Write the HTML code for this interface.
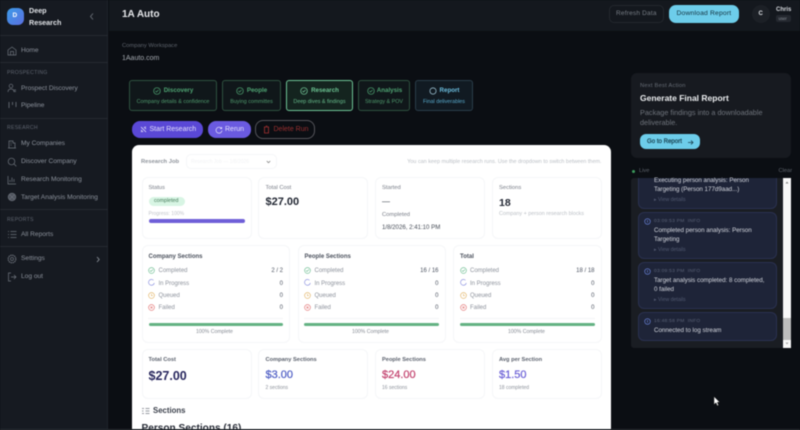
<!DOCTYPE html>
<html><head><meta charset="utf-8">
<style>
*{box-sizing:border-box;margin:0;padding:0}
html,body{width:800px;height:430px;overflow:hidden;background:#0b0e13;font-family:"Liberation Sans",sans-serif}
.a{position:absolute}
.t{position:absolute;white-space:nowrap;line-height:1}
#root{position:relative;width:800px;height:430px;overflow:hidden;filter:blur(.45px)}
.nav{color:#8b919b;font-size:6.6px}
.cap{color:#5f6570;font-size:5.2px;letter-spacing:.25px}
.line{position:absolute;left:0;width:108px;height:1px;background:#262a31}
svg{position:absolute;fill:none}
.step{position:absolute;top:80px;height:30.5px;border:1px solid #2f5240;border-radius:3px;background:#10171a}
.step b{position:absolute;top:7px;left:0;right:0;text-align:center;font-size:6.2px;color:#4fa573;line-height:1;padding-left:11px}
.step i{position:absolute;top:18.5px;left:0;right:0;text-align:center;font-style:normal;font-size:5.4px;color:#4f9a6d;line-height:1;white-space:nowrap}
.step svg{top:6px}
.card{position:absolute;background:#fff;border:1px solid #f5f6f8;border-radius:6px}
.lab{color:#777c86;font-size:5.8px}
.row{color:#8c919b;font-size:6px}
.val{color:#4b5260;font-size:6px;text-align:right}
.log{position:absolute;left:638px;width:139px;background:#1e2438;border:1px solid #2a3150;border-radius:6px}
.lt{color:#d5d8df;font-size:6.2px}
.lm{color:#5c6478;font-size:4.8px;letter-spacing:.3px}
.vd{color:#515970;font-size:5.2px}
.m{-webkit-text-stroke:.22px currentColor}
</style></head><body>
<div id="root">
<!-- sidebar -->
<div class="a" style="left:0;top:0;width:108px;height:430px;background:#161a21;border-right:1px solid #20242b"></div>
<div class="a" style="left:7px;top:8px;width:17px;height:17px;border-radius:6px;background:linear-gradient(135deg,#3b9be8,#5b6fe0)"></div>
<div class="t" style="left:12.5px;top:13px;font-size:6.5px;font-weight:bold;color:#fff">D</div>
<div class="t" style="left:29px;top:7px;font-size:7.2px;font-weight:bold;color:#dfe2e6">Deep</div>
<div class="t" style="left:29px;top:19px;font-size:7.2px;font-weight:bold;color:#dfe2e6">Research</div>
<svg style="left:89px;top:12px" width="6" height="9" viewBox="0 0 6 9"><path d="M4 1.500 1.500 4.500 4 7.500" stroke="#6a7078" stroke-width=".9"/></svg>
<div class="line" style="top:35px"></div>
<svg style="left:7px;top:46px" width="10" height="10" viewBox="0 0 10 10"><path d="M1 9V4L5 1l4 3v5zM3.500 9V5.500h3V9" stroke="#6f757e" stroke-width=".7"/></svg>
<div class="t nav" style="left:21px;top:47.500px">Home</div>
<div class="line" style="top:62px"></div>
<div class="t cap" style="left:7px;top:70.500px">PROSPECTING</div>
<svg style="left:7px;top:83px" width="10" height="10" viewBox="0 0 10 10"><circle cx="4" cy="3" r="1.800" stroke="#6f757e" stroke-width=".7"/><path d="M1 9c0-2 1.300-3 3-3s3 1 3 3M7 7h2M7 8.500h2" stroke="#6f757e" stroke-width=".7"/></svg>
<div class="t nav" style="left:21px;top:85.500px">Prospect Discovery</div>
<svg style="left:8px;top:101px" width="9" height="9" viewBox="0 0 9 9"><path d="M1 1v6M4.500 1v3M8 1v5" stroke="#6f757e" stroke-width=".8"/></svg>
<div class="t nav" style="left:21px;top:103px">Pipeline</div>
<div class="line" style="top:118px"></div>
<div class="t cap" style="left:7px;top:126px">RESEARCH</div>
<svg style="left:7px;top:139px" width="10" height="10" viewBox="0 0 10 10"><path d="M2 9V2h4v2h2v5zM1 9h8M3.500 4h1M3.500 6h1" stroke="#6f757e" stroke-width=".7"/></svg>
<div class="t nav" style="left:21px;top:141px">My Companies</div>
<svg style="left:7px;top:157px" width="10" height="10" viewBox="0 0 10 10"><circle cx="4.500" cy="4.500" r="3.300" stroke="#6f757e" stroke-width=".7"/><path d="M7 7l2.300 2.300" stroke="#6f757e" stroke-width=".7"/></svg>
<div class="t nav" style="left:21px;top:158.500px">Discover Company</div>
<svg style="left:7px;top:175px" width="10" height="10" viewBox="0 0 10 10"><path d="M1 1v8h8M3 7V5M5 7V2.500M7 7V4" stroke="#6f757e" stroke-width=".7"/></svg>
<div class="t nav" style="left:21px;top:176.500px">Research Monitoring</div>
<svg style="left:7px;top:192px" width="10" height="10" viewBox="0 0 10 10"><circle cx="5" cy="5" r="3.800" fill="#4d525b" stroke="#6f757e" stroke-width=".7"/><path d="M2.500 2.500l5 5M7.500 2.500l-5 5" stroke="#6f757e" stroke-width=".6"/></svg>
<div class="t nav" style="left:21px;top:194.500px">Target Analysis Monitoring</div>
<div class="line" style="top:209px"></div>
<div class="t cap" style="left:7px;top:217.500px">REPORTS</div>
<svg style="left:8px;top:230px" width="9" height="9" viewBox="0 0 9 9"><path d="M0 1.500h1M2.500 1.500H8.500M0 4.500h1M2.500 4.500H8.500M0 7.500h1M2.500 7.500H8.500" stroke="#6f757e" stroke-width=".8"/></svg>
<div class="t nav" style="left:21px;top:231.500px">All Reports</div>
<div class="line" style="top:246px"></div>
<svg style="left:7px;top:254px" width="10" height="10" viewBox="0 0 10 10"><circle cx="5" cy="5" r="3.800" stroke="#6f757e" stroke-width="1.100" stroke-dasharray="1.400 .6"/><circle cx="5" cy="5" r="1.500" stroke="#6f757e" stroke-width=".7"/></svg>
<div class="t nav" style="left:21px;top:255.500px">Settings</div>
<svg style="left:95px;top:256px" width="6" height="7" viewBox="0 0 6 7"><path d="M2 1l2.200 2.500L2 6" stroke="#8a9098" stroke-width=".9"/></svg>
<svg style="left:7px;top:272px" width="10" height="10" viewBox="0 0 10 10"><path d="M4 1H1.500v8H4M4 5h5M7 3l2 2-2 2" stroke="#6f757e" stroke-width=".7"/></svg>
<div class="t nav" style="left:21px;top:273.500px">Log out</div>

<!-- header -->
<div class="a" style="left:109px;top:0;width:691px;height:31px;background:#14181e"></div>
<div class="t" style="left:122px;top:9.500px;font-size:10px;font-weight:bold;color:#e6e8eb">1A Auto</div>
<div class="a" style="left:609px;top:5px;width:55px;height:18px;border:1px solid #23272d;border-radius:5px"></div>
<div class="t" style="left:616px;top:10.500px;font-size:6.500px;color:#777d85;letter-spacing:.2px">Refresh Data</div>
<div class="a" style="left:669px;top:5px;width:70px;height:18px;border-radius:7px;background:#6dcdea"></div>
<div class="t" style="left:676.500px;top:10.500px;font-size:6.800px;color:#12303d;letter-spacing:.15px">Download Report</div>
<div class="a" style="left:752px;top:5px;width:18px;height:18px;border-radius:50%;background:#1c2026"></div>
<div class="t" style="left:758.500px;top:11px;font-size:6px;font-weight:bold;color:#dfe2e6">C</div>
<div class="t" style="left:776px;top:6.500px;font-size:6px;font-weight:bold;color:#d5d8dd">Chris</div>
<div class="a" style="left:776px;top:15px;width:15px;height:7px;border-radius:2px;background:#24282f"></div>
<div class="t" style="left:778.500px;top:16.500px;font-size:4.300px;color:#8a9098">user</div>

<!-- workspace -->
<div class="t" style="left:122px;top:43.500px;font-size:5.800px;color:#5e646d">Company Workspace</div>
<div class="t" style="left:122px;top:54.500px;font-size:7px;color:#a5aab1">1Aauto.com</div>

<!-- stepper -->
<div class="step" style="left:129px;width:88px"><svg style="left:23px" width="8" height="8" viewBox="0 0 8 8"><circle cx="4" cy="4" r="3.300" stroke="#4fa573" stroke-width=".7"/><path d="M2.500 4l1 1 2-2" stroke="#4fa573" stroke-width=".7"/></svg><b>Discovery</b><i>Company details &amp; confidence</i></div>
<div class="step" style="left:222px;width:59px"><svg style="left:13px" width="8" height="8" viewBox="0 0 8 8"><circle cx="4" cy="4" r="3.300" stroke="#4fa573" stroke-width=".7"/><path d="M2.500 4l1 1 2-2" stroke="#4fa573" stroke-width=".7"/></svg><b>People</b><i>Buying committes</i></div>
<div class="step" style="left:286px;width:67px;border-color:#6fc596;background:#14241f"><svg style="left:13px" width="8" height="8" viewBox="0 0 8 8"><circle cx="4" cy="4" r="3.300" stroke="#78cf9e" stroke-width=".7"/><path d="M2.500 4l1 1 2-2" stroke="#78cf9e" stroke-width=".7"/></svg><b style="color:#6cc492">Research</b><i style="color:#66bb8b">Deep dives &amp; findings</i></div>
<div class="step" style="left:358px;width:52px"><svg style="left:8px" width="8" height="8" viewBox="0 0 8 8"><circle cx="4" cy="4" r="3.300" stroke="#4fa573" stroke-width=".7"/><path d="M2.500 4l1 1 2-2" stroke="#4fa573" stroke-width=".7"/></svg><b>Analysis</b><i>Strategy &amp; POV</i></div>
<div class="step" style="left:415px;width:58px;border-color:#2a3d4a;background:#111a22"><svg style="left:13px" width="8" height="8" viewBox="0 0 8 8"><circle cx="4" cy="4" r="3.100" stroke="#a8cfe0" stroke-width=".7"/></svg><b style="color:#6cbfe0">Report</b><i style="color:#58aacc">Final deliverables</i></div>

<!-- buttons -->
<div class="a" style="left:132px;top:121px;width:71px;height:17px;border-radius:8px;background:#5a48d6"></div>
<svg style="left:140px;top:126px" width="7" height="7" viewBox="0 0 7 7"><path d="M1 1l5 5M1 4l2 2M4 1l2 2M1 6l1-1M5 1l1 0" stroke="#e6e3fa" stroke-width=".8"/></svg>
<div class="t" style="left:149.500px;top:126px;font-size:7px;color:#e2dffa">Start Research</div>
<div class="a" style="left:208px;top:121px;width:43px;height:17px;border-radius:8px;background:#6a5ae0"></div>
<svg style="left:215px;top:125.500px" width="8" height="8" viewBox="0 0 8 8"><path d="M6.500 2.500A3 3 0 1 0 7 4.500M6.700 1v1.700H5" stroke="#e6e3fa" stroke-width=".7"/></svg>
<div class="t" style="left:225px;top:126px;font-size:7px;color:#e2dffa">Rerun</div>
<div class="a" style="left:255px;top:120px;width:60px;height:19px;border-radius:8px;border:1px solid #55555b"></div>
<svg style="left:263px;top:125px" width="7" height="9" viewBox="0 0 7 9"><path d="M1.500 2h4v6h-4zM1 2h5M2.800 1h1.500" stroke="#a83232" stroke-width=".8"/></svg>
<div class="t" style="left:273.500px;top:126px;font-size:7px;color:#9a3030">Delete Run</div>

<!-- white panel -->
<div class="a" style="left:132px;top:145px;width:479px;height:290px;background:#fff;border-radius:7px"></div>
<div class="t" style="left:141px;top:159.500px;font-size:5.800px;font-weight:bold;color:#8d929a">Research Job</div>
<div class="a" style="left:186px;top:154px;width:91px;height:15px;border:1px solid #f5f6f8;border-radius:5px"></div>
<div class="t" style="left:191px;top:159.500px;font-size:5px;color:#f1f2f4">Research Job — 1/8/2026</div>
<svg style="left:266px;top:160px" width="5" height="4" viewBox="0 0 5 4"><path d="M.8 1l1.700 1.700L4.200 1" stroke="#777" stroke-width=".7"/></svg>
<div class="t" style="right:198.500px;top:159.500px;font-size:5.430px;color:#bcc0c6">You can keep multiple research runs. Use the dropdown to switch between them.</div>

<!-- top cards -->
<div class="card" style="left:142px;top:177px;width:110px;height:62px"></div>
<div class="t lab" style="left:148.500px;top:185.500px">Status</div>
<div class="a" style="left:148.500px;top:197px;width:36px;height:9px;border-radius:5px;background:#d8f5e4"></div>
<div class="t" style="left:154px;top:199px;font-size:5.300px;color:#467a5b">completed</div>
<div class="t" style="left:148.500px;top:211.500px;font-size:5px;color:#c0c3c9">Progress: 100%</div>
<div class="a" style="left:148.500px;top:219px;width:96px;height:3.500px;border-radius:2px;background:#6f5fd8"></div>

<div class="card" style="left:258px;top:177px;width:110px;height:62px"></div>
<div class="t lab" style="left:265.500px;top:185.500px">Total Cost</div>
<div class="t" style="left:265.500px;top:197px;font-size:11px;font-weight:bold;color:#222733">$27.00</div>

<div class="card" style="left:375px;top:177px;width:110px;height:62px"></div>
<div class="t lab" style="left:382px;top:185.500px">Started</div>
<div class="t" style="left:382px;top:197.500px;font-size:8px;color:#444a55">—</div>
<div class="t lab" style="left:382px;top:212.500px">Completed</div>
<div class="t" style="left:382px;top:224.500px;font-size:6.100px;color:#444a55">1/8/2026, 2:41:10 PM</div>

<div class="card" style="left:492px;top:177px;width:110px;height:62px"></div>
<div class="t lab" style="left:499px;top:185.500px">Sections</div>
<div class="t" style="left:499px;top:197.500px;font-size:10.500px;font-weight:bold;color:#222733">18</div>
<div class="t" style="left:499px;top:211.500px;font-size:5.400px;color:#bcc0c6">Company + person research blocks</div>

<!-- section cards -->
<div class="card" style="left:142px;top:245px;width:148px;height:98px"></div>
<div class="card" style="left:298px;top:245px;width:148px;height:98px"></div>
<div class="card" style="left:453px;top:245px;width:149px;height:98px"></div>

<div class="t" style="left:148.500px;top:254px;font-size:6px;font-weight:bold;color:#4a505c">Company Sections</div>
<div class="t" style="left:304.500px;top:254px;font-size:6px;font-weight:bold;color:#4a505c">People Sections</div>
<div class="t" style="left:460px;top:254px;font-size:6px;font-weight:bold;color:#4a505c">Total</div>

<svg style="left:148px;top:267px" width="7" height="7" viewBox="0 0 7 7"><circle cx="3.500" cy="3.500" r="2.900" stroke="#63b98a" stroke-width=".6"/><path d="M2 3.500l1 1 2-2" stroke="#63b98a" stroke-width=".6"/></svg>
<svg style="left:148px;top:279px" width="7" height="7" viewBox="0 0 7 7"><path d="M5.500 1.300A2.900 2.900 0 1 0 6.300 4" stroke="#7f86dc" stroke-width=".6"/></svg>
<svg style="left:148px;top:291.500px" width="7" height="7" viewBox="0 0 7 7"><circle cx="3.500" cy="3.500" r="2.900" stroke="#e0ae5a" stroke-width=".6"/><path d="M3.500 2v1.700h1.200" stroke="#e0ae5a" stroke-width=".6"/></svg>
<svg style="left:148px;top:304px" width="7" height="7" viewBox="0 0 7 7"><circle cx="3.500" cy="3.500" r="2.900" stroke="#e06a6a" stroke-width=".6"/><path d="M2.400 2.400l2.200 2.200M4.600 2.400l-2.200 2.200" stroke="#e06a6a" stroke-width=".6"/></svg>
<div class="t row" style="left:158.500px;top:268px">Completed</div>
<div class="t row" style="left:158.500px;top:280.500px">In Progress</div>
<div class="t row" style="left:158.500px;top:292.500px">Queued</div>
<div class="t row" style="left:158.500px;top:305px">Failed</div>
<div class="t val" style="right:517px;top:268px">2 / 2</div>
<div class="t val" style="right:517px;top:280.500px">0</div>
<div class="t val" style="right:517px;top:292.500px">0</div>
<div class="t val" style="right:517px;top:305px">0</div>
<div class="a" style="left:148px;top:317.500px;width:135px;height:1px;background:#f3f4f6"></div>
<div class="a" style="left:148.500px;top:322.700px;width:134.500px;height:3.500px;border-radius:2px;background:#64b283"></div>
<div class="t" style="left:196px;top:329.500px;font-size:5.200px;color:#868b94">100% Complete</div>

<svg style="left:304px;top:267px" width="7" height="7" viewBox="0 0 7 7"><circle cx="3.500" cy="3.500" r="2.900" stroke="#63b98a" stroke-width=".6"/><path d="M2 3.500l1 1 2-2" stroke="#63b98a" stroke-width=".6"/></svg>
<svg style="left:304px;top:279px" width="7" height="7" viewBox="0 0 7 7"><path d="M5.500 1.300A2.900 2.900 0 1 0 6.300 4" stroke="#7f86dc" stroke-width=".6"/></svg>
<svg style="left:304px;top:291.500px" width="7" height="7" viewBox="0 0 7 7"><circle cx="3.500" cy="3.500" r="2.900" stroke="#e0ae5a" stroke-width=".6"/><path d="M3.500 2v1.700h1.200" stroke="#e0ae5a" stroke-width=".6"/></svg>
<svg style="left:304px;top:304px" width="7" height="7" viewBox="0 0 7 7"><circle cx="3.500" cy="3.500" r="2.900" stroke="#e06a6a" stroke-width=".6"/><path d="M2.400 2.400l2.200 2.200M4.600 2.400l-2.200 2.200" stroke="#e06a6a" stroke-width=".6"/></svg>
<div class="t row" style="left:314.500px;top:268px">Completed</div>
<div class="t row" style="left:314.500px;top:280.500px">In Progress</div>
<div class="t row" style="left:314.500px;top:292.500px">Queued</div>
<div class="t row" style="left:314.500px;top:305px">Failed</div>
<div class="t val" style="right:361.500px;top:268px">16 / 16</div>
<div class="t val" style="right:361.500px;top:280.500px">0</div>
<div class="t val" style="right:361.500px;top:292.500px">0</div>
<div class="t val" style="right:361.500px;top:305px">0</div>
<div class="a" style="left:304px;top:317.500px;width:135px;height:1px;background:#f3f4f6"></div>
<div class="a" style="left:304px;top:322.700px;width:135px;height:3.500px;border-radius:2px;background:#64b283"></div>
<div class="t" style="left:352px;top:329.500px;font-size:5.200px;color:#868b94">100% Complete</div>

<svg style="left:460px;top:267px" width="7" height="7" viewBox="0 0 7 7"><circle cx="3.500" cy="3.500" r="2.900" stroke="#63b98a" stroke-width=".6"/><path d="M2 3.500l1 1 2-2" stroke="#63b98a" stroke-width=".6"/></svg>
<svg style="left:460px;top:279px" width="7" height="7" viewBox="0 0 7 7"><path d="M5.500 1.300A2.900 2.900 0 1 0 6.300 4" stroke="#7f86dc" stroke-width=".6"/></svg>
<svg style="left:460px;top:291.500px" width="7" height="7" viewBox="0 0 7 7"><circle cx="3.500" cy="3.500" r="2.900" stroke="#e0ae5a" stroke-width=".6"/><path d="M3.500 2v1.700h1.200" stroke="#e0ae5a" stroke-width=".6"/></svg>
<svg style="left:460px;top:304px" width="7" height="7" viewBox="0 0 7 7"><circle cx="3.500" cy="3.500" r="2.900" stroke="#e06a6a" stroke-width=".6"/><path d="M2.400 2.400l2.200 2.200M4.600 2.400l-2.200 2.200" stroke="#e06a6a" stroke-width=".6"/></svg>
<div class="t row" style="left:470px;top:268px">Completed</div>
<div class="t row" style="left:470px;top:280.500px">In Progress</div>
<div class="t row" style="left:470px;top:292.500px">Queued</div>
<div class="t row" style="left:470px;top:305px">Failed</div>
<div class="t val" style="right:205.500px;top:268px">18 / 18</div>
<div class="t val" style="right:205.500px;top:280.500px">0</div>
<div class="t val" style="right:205.500px;top:292.500px">0</div>
<div class="t val" style="right:205.500px;top:305px">0</div>
<div class="a" style="left:460px;top:317.500px;width:135px;height:1px;background:#f3f4f6"></div>
<div class="a" style="left:460px;top:322.700px;width:135px;height:3.500px;border-radius:2px;background:#64b283"></div>
<div class="t" style="left:508px;top:329.500px;font-size:5.200px;color:#868b94">100% Complete</div>

<!-- cost cards -->
<div class="card" style="left:142px;top:349px;width:110px;height:50px"></div>
<div class="t" style="left:148.500px;top:358px;font-size:5.700px;font-weight:bold;color:#5b616d">Total Cost</div>
<div class="t" style="left:148.500px;top:370px;font-size:12.500px;font-weight:bold;color:#28275e">$27.00</div>
<div class="card" style="left:258px;top:349px;width:110px;height:50px"></div>
<div class="t" style="left:265.500px;top:358px;font-size:5.700px;font-weight:bold;color:#5b616d">Company Sections</div>
<div class="t m" style="left:265.500px;top:370px;font-size:11px;color:#4c5cc4">$3.00</div>
<div class="t" style="left:265.500px;top:385.500px;font-size:5px;color:#8d929b">2 sections</div>
<div class="card" style="left:375px;top:349px;width:110px;height:50px"></div>
<div class="t" style="left:382px;top:358px;font-size:5.700px;font-weight:bold;color:#5b616d">People Sections</div>
<div class="t m" style="left:382px;top:370px;font-size:11px;color:#c2416d">$24.00</div>
<div class="t" style="left:382px;top:385.500px;font-size:5px;color:#8d929b">16 sections</div>
<div class="card" style="left:492px;top:349px;width:110px;height:50px"></div>
<div class="t" style="left:499px;top:358px;font-size:5.700px;font-weight:bold;color:#5b616d">Avg per Section</div>
<div class="t m" style="left:499px;top:370px;font-size:11px;color:#6a5fd6">$1.50</div>
<div class="t" style="left:499px;top:385.500px;font-size:5px;color:#8d929b">18 completed</div>

<svg style="left:142px;top:407px" width="8" height="8" viewBox="0 0 8 8"><path d="M0 1.500h2M3.500 1.500h4M0 4h1.500M3.500 4h4M0 6.500h2M3.500 6.500h4" stroke="#767b84" stroke-width=".7"/></svg>
<div class="t" style="left:153px;top:407px;font-size:7.800px;font-weight:bold;color:#3a3f4a">Sections</div>
<div class="t" style="left:141.500px;top:423.500px;font-size:10.100px;font-weight:bold;color:#2b2f3a">Person Sections (16)</div>
<div class="a" style="left:0;top:428.500px;width:800px;height:1.500px;background:#2c3136"></div>

<!-- next best action -->
<div class="a" style="left:631px;top:73px;width:160px;height:85px;border-radius:6px;background:#171a20"></div>
<div class="t" style="left:640px;top:83.500px;font-size:5.800px;color:#666c75;letter-spacing:.2px">Next Best Action</div>
<div class="t" style="left:640px;top:93.500px;font-size:8.500px;font-weight:bold;color:#eceef0">Generate Final Report</div>
<div class="t" style="left:640px;top:108.500px;font-size:7.300px;color:#6f747c">Package findings into a downloadable</div>
<div class="t" style="left:640px;top:118.500px;font-size:7.300px;color:#6f747c">deliverable.</div>
<div class="a" style="left:640px;top:134.300px;width:60px;height:15px;border-radius:6px;background:#6dcdea"></div>
<div class="t m" style="left:647px;top:139px;font-size:6.100px;color:#17404f">Go to Report</div>
<svg style="left:686.500px;top:138.500px" width="7" height="7" viewBox="0 0 7 7"><path d="M1 3.500h5M4 1.500l2 2-2 2" stroke="#17404f" stroke-width=".8"/></svg>

<!-- log panel -->
<div class="a" style="left:632px;top:170px;width:3px;height:3px;border-radius:50%;background:#3c9a5c"></div>
<div class="t" style="left:639px;top:168.500px;font-size:5.700px;color:#5e646c">Live</div>
<div class="t" style="left:778.500px;top:168.500px;font-size:5.700px;color:#5e646c">Clear</div>
<div class="a" style="left:631px;top:178px;width:160px;height:170px;background:#1a1d23;border-radius:3px;overflow:hidden"></div>
<div class="a" style="left:783px;top:178px;width:8px;height:170px;background:#f8f8f8"></div>
<div class="a" style="left:783px;top:318px;width:7.500px;height:22px;background:#bdbdbd"></div>
<svg style="left:785px;top:181px" width="4" height="3" viewBox="0 0 4 3"><path d="M2 .5 3.500 2.500H.5z" fill="#888"/></svg>
<svg style="left:785px;top:342px" width="4" height="3" viewBox="0 0 4 3"><path d="M2 2.500 3.500 .5H.5z" fill="#aaa"/></svg>

<div class="a" style="left:631px;top:178px;width:152px;height:170px;overflow:hidden">
  <div class="a" style="left:7px;top:-30px;width:139px;height:61px;background:#1e2438;border:1px solid #2a3150;border-radius:6px"></div>
</div>
<div class="t lt" style="left:654px;top:178px">Executing person analysis: Person</div>
<div class="t lt" style="left:654px;top:186.500px">Targeting (Person 177d9aad...)</div>
<div class="t vd" style="left:654px;top:197.500px">▸ View details</div>

<div class="log" style="top:212px;height:47px"></div>
<svg style="left:644px;top:218px" width="7" height="7" viewBox="0 0 7 7"><circle cx="3.500" cy="3.500" r="2.800" stroke="#6f8ae8" stroke-width=".6"/><path d="M3.500 2v2.600" stroke="#6f8ae8" stroke-width=".6"/></svg>
<div class="t lm" style="left:654px;top:219.500px">03:09:53 PM &nbsp;INFO</div>
<div class="t lt" style="left:654px;top:228px">Completed person analysis: Person</div>
<div class="t lt" style="left:654px;top:236.700px">Targeting</div>
<div class="t vd" style="left:654px;top:247.500px">▸ View details</div>

<div class="log" style="top:262px;height:47px"></div>
<svg style="left:644px;top:268px" width="7" height="7" viewBox="0 0 7 7"><circle cx="3.500" cy="3.500" r="2.800" stroke="#6f8ae8" stroke-width=".6"/><path d="M3.500 2v2.600" stroke="#6f8ae8" stroke-width=".6"/></svg>
<div class="t lm" style="left:654px;top:269.500px">03:09:53 PM &nbsp;INFO</div>
<div class="t lt" style="left:654px;top:278px">Target analysis completed: 8 completed,</div>
<div class="t lt" style="left:654px;top:286.700px">0 failed</div>
<div class="t vd" style="left:654px;top:297.500px">▸ View details</div>

<div class="log" style="top:312px;height:29px"></div>
<svg style="left:644px;top:318px" width="7" height="7" viewBox="0 0 7 7"><circle cx="3.500" cy="3.500" r="2.800" stroke="#6f8ae8" stroke-width=".6"/><path d="M3.500 2v2.600" stroke="#6f8ae8" stroke-width=".6"/></svg>
<div class="t lm" style="left:654px;top:319.500px">16:48:58 PM &nbsp;INFO</div>
<div class="t lt" style="left:654px;top:328px">Connected to log stream</div>

<!-- cursor -->
<svg style="left:713px;top:396px" width="7" height="11" viewBox="0 0 7 11"><path d="M1 .5v8l2-1.700 1.300 3 1.300-.6L4.300 6.300H6.700z" fill="#fff" stroke="#222" stroke-width=".5"/></svg>
</div>
</body></html>
